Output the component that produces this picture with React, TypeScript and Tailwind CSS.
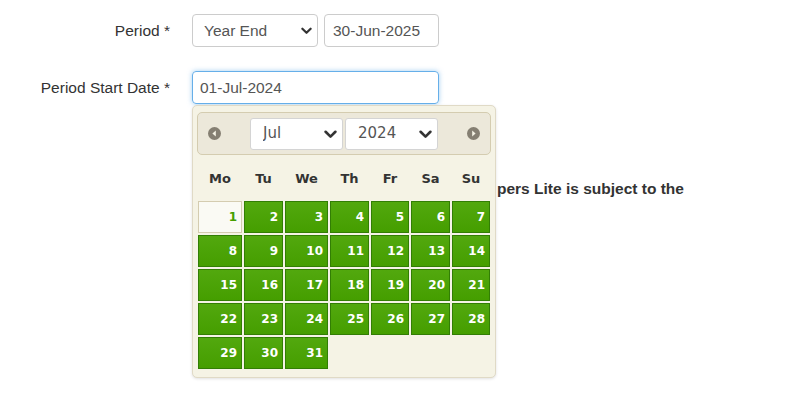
import React from "react";

const COLS = "grid-cols-[44px_39px_43px_39px_38px_39px_38px]";
const DAY_NAMES = ["Mo", "Tu", "We", "Th", "Fr", "Sa", "Su"];
const SELECTED = 1;

function Chevron({ className }: { className?: string }) {
  return (
    <svg viewBox="0 0 12 8" className={className} fill="none">
      <path d="M1.5 1.5 6 6l4.5-4.5" stroke="#333" strokeWidth="2.4" strokeLinecap="round" strokeLinejoin="round" />
    </svg>
  );
}

function NavIcon({ dir }: { dir: "prev" | "next" }) {
  return (
    <svg width="13" height="13" viewBox="0 0 13 13" className="shrink-0">
      <circle cx="6.5" cy="6.5" r="6.5" fill="#857f72" />
      {dir === "prev" ? (
        <polygon points="7.8,3.6 7.8,9.4 4.4,6.5" fill="#f5f3e5" />
      ) : (
        <polygon points="5.2,3.6 5.2,9.4 8.6,6.5" fill="#f5f3e5" />
      )}
    </svg>
  );
}

function PickerSelect({ value, options }: { value: string; options: string[] }) {
  return (
    <div className="relative w-[93px] h-[32px]">
      <select
        defaultValue={value}
        className="w-full h-full appearance-none rounded-[3px] border border-[#d4d4d4] bg-white pl-[12px] text-[15px] text-[#555] font-['DejaVu_Sans',Verdana,sans-serif] outline-none"
      >
        {options.map((o) => (
          <option key={o}>{o}</option>
        ))}
      </select>
      <Chevron className="pointer-events-none absolute right-[6px] top-[12px] w-[13px] h-[9px]" />
    </div>
  );
}

function Datepicker() {
  const days = Array.from({ length: 31 }, (_, i) => i + 1);
  return (
    <div className="absolute left-0 top-[calc(100%+1px)] z-10 w-[304px] rounded-[5px] border border-[#e0dac6] bg-[#f5f3e5] px-[4px] pt-[6px] pb-[8px] shadow-[0_1px_3px_rgba(0,0,0,0.12)] font-['DejaVu_Sans',Verdana,sans-serif]">
      {/* Header */}
      <div className="flex h-[43px] items-center justify-between rounded-[5px] border border-[#d4ccb0] bg-[#ece8da] px-[10px]">
        <NavIcon dir="prev" />
        <div className="flex gap-[2px]">
          <PickerSelect value="Jul" options={["Jan", "Feb", "Mar", "Apr", "May", "Jun", "Jul", "Aug", "Sep", "Oct", "Nov", "Dec"]} />
          <PickerSelect value="2024" options={["2022", "2023", "2024", "2025", "2026"]} />
        </div>
        <NavIcon dir="next" />
      </div>

      {/* Day names */}
      <div className={`ml-[1px] grid ${COLS} gap-x-[2px] h-[46px] items-center pt-[1px]`}>
        {DAY_NAMES.map((d) => (
          <div key={d} className="text-center text-[13px] font-bold text-[#333]">
            {d}
          </div>
        ))}
      </div>

      {/* Days */}
      <div className={`ml-[1px] grid ${COLS} auto-rows-[32px] gap-[2px]`}>
        {days.map((d) =>
          d === SELECTED ? (
            <div
              key={d}
              className="flex items-center justify-end border border-[#d4ccb0] bg-[#fafaf4] pr-[4px] text-[12px] font-bold text-[#459e00]"
            >
              {d}
            </div>
          ) : (
            <div
              key={d}
              className="flex items-center justify-end border border-[#327e04] bg-gradient-to-b from-[#52a80e] to-[#459e00] pr-[4px] text-[12px] font-bold text-white"
            >
              {d}
            </div>
          )
        )}
      </div>
    </div>
  );
}

export default function App() {
  return (
    <div className="min-h-screen bg-white pt-[14px] font-['Liberation_Sans',Arial,sans-serif] text-[15.5px] text-[#333]">
      {/* Period */}
      <div className="flex items-center h-[33px]">
        <label className="w-[170px] text-right">Period *</label>
        <div className="relative ml-[22px] w-[126px] h-[33px]">
          <select
            defaultValue="Year End"
            className="w-full h-full appearance-none rounded-[4px] border border-[#ccc] bg-white pl-[11px] text-[15.5px] text-[#555] outline-none"
          >
            <option>Year End</option>
            <option>Half Year</option>
            <option>Quarter</option>
          </select>
          <Chevron className="pointer-events-none absolute right-[6px] top-[13px] w-[11px] h-[8px]" />
        </div>
        <input
          defaultValue="30-Jun-2025"
          className="ml-[6px] w-[115px] h-[33px] rounded-[4px] border border-[#ccc] px-[8px] text-[15.5px] text-[#555] outline-none"
        />
      </div>

      {/* Period Start Date */}
      <div className="mt-[24px] flex items-center h-[33px]">
        <label className="w-[170px] text-right">Period Start Date *</label>
        <div className="relative ml-[22px]">
          <input
            defaultValue="01-Jul-2024"
            className="w-[247px] h-[33px] rounded-[4px] border border-[#66afe9] px-[7px] text-[15.5px] text-[#555] outline-none shadow-[0_0_5px_rgba(102,175,233,0.6)]"
          />
          <Datepicker />
        </div>
      </div>

      {/* Terms text, the start of it sits under the picker */}
      <p className="mt-[73px] ml-[497px] whitespace-nowrap font-bold">pers Lite is subject to the</p>
    </div>
  );
}
